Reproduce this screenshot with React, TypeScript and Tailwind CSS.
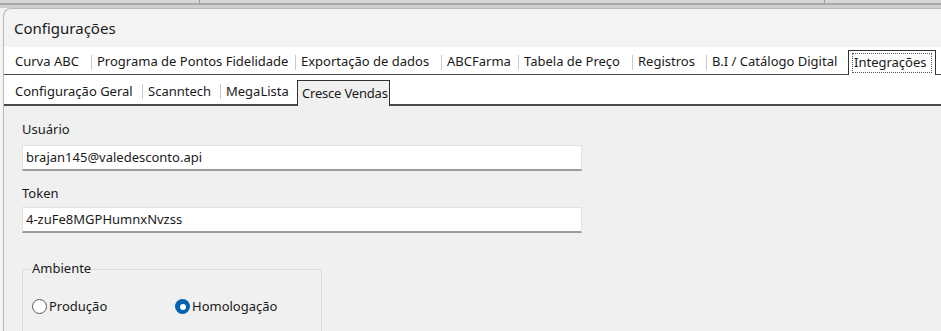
import React from "react";

const row1 = [
  { label: "Curva ABC", w: "w-[82px]", first: true },
  { label: "Programa de Pontos Fidelidade", w: "w-[204px]" },
  { label: "Exportação de dados", w: "w-[146px]" },
  { label: "ABCFarma", w: "w-[77px]" },
  { label: "Tabela de Preço", w: "w-[114px]" },
  { label: "Registros", w: "w-[74px]" },
  { label: "B.I / Catálogo Digital", w: "w-[140px]" },
];

const row2 = [
  { label: "Configuração Geral", w: "w-[133px]", first: true },
  { label: "Scanntech", w: "w-[78px]" },
  { label: "MegaLista", w: "w-[75px]" },
];

function Tab({ label, w, first }: { label: string; w: string; first?: boolean }) {
  return (
    <div className={`${w} h-full flex items-center`}>
      {!first && <div className="w-px h-[15px] bg-[#c9c9c9] shrink-0" />}
      <span className={`${first ? "pl-[6px]" : "pl-[5px]"} whitespace-nowrap text-[#1a1a1a]`}>{label}</span>
    </div>
  );
}

function Radio({ checked, label }: { checked?: boolean; label: string }) {
  return (
    <div className="flex items-center gap-[2px]">
      {checked ? (
        <div className="w-[15px] h-[15px] rounded-full bg-[#0063b1] flex items-center justify-center">
          <div className="w-[6px] h-[6px] rounded-full bg-white" />
        </div>
      ) : (
        <div className="w-[15px] h-[15px] rounded-full border border-[#5a5a5a] bg-white" />
      )}
      <span className="text-[#1a1a1a]">{label}</span>
    </div>
  );
}

export default function App() {
  return (
    <div className="w-[941px] h-[331px] overflow-hidden bg-[#f4f4f4] flex flex-col font-['Noto_Sans',sans-serif] text-[13px]">
      {/* strip from window behind */}
      <div className="h-[8px] flex flex-col shrink-0">
        <div className="h-[3px] bg-[#d6d6d6] flex">
          <div className="w-[200px] border-r border-[#9a9a9a]" />
          <div className="w-[625px] border-r border-[#9a9a9a]" />
        </div>
        <div className="h-[2px] bg-[#a9a9a9]" />
        <div className="h-[3px] bg-[#cfcfcf]" />
      </div>

      <div className="flex-1 ml-[3px] border-l border-t border-[#b9b9b9] rounded-tl-[8px] bg-[#f3f3f4] flex flex-col overflow-hidden">
        {/* title */}
        <div className="h-[38px] shrink-0 flex items-center pl-[10px] text-[15px] text-[#1a1a1a]">Configurações</div>

        {/* row 1 tabs */}
        <div className="h-[28px] shrink-0 bg-white flex items-end border-b border-[#4a4a4a] pl-[5px]">
          <div className="flex h-[24px]">
            {row1.map((t) => (
              <Tab key={t.label} {...t} />
            ))}
          </div>
          <div className="ml-[2px] w-[88px] h-[25px] -mb-px bg-white border border-b-0 border-[#333] px-[3px] pt-[2px]">
            <div className="h-[20px] border border-dotted border-[#555] flex items-center pl-[1px] whitespace-nowrap text-[#1a1a1a]">Integrações</div>
          </div>
        </div>

        {/* row 2 tabs */}
        <div className="h-[31px] shrink-0 bg-white flex items-end border-b-2 border-[#4a4a4a] pl-[5px]">
          <div className="flex h-[25px]">
            {row2.map((t) => (
              <Tab key={t.label} {...t} />
            ))}
          </div>
          <div className="ml-[2px] w-[93px] h-[26px] -mb-[2px] bg-[#f0f0f0] border border-b-0 border-[#333] flex items-center pl-[4px] whitespace-nowrap tracking-[-0.2px] text-[#1a1a1a]">
            Cresce Vendas
          </div>
        </div>

        {/* content */}
        <div className="flex-1 bg-[#f0f0f0] pl-[18px] pt-[14px] text-[#1a1a1a]">
          <div className="h-[20px] flex items-center">Usuário</div>
          <div className="mt-[5px] w-[560px] h-[26px] bg-white border border-[#e2e2e2] border-b-2 border-b-[#9c9c9c] flex items-center pl-[3px]">
            brajan145@valedesconto.api
          </div>
          <div className="mt-[13px] h-[20px] flex items-center">Token</div>
          <div className="mt-[3px] w-[560px] h-[26px] bg-white border border-[#e2e2e2] border-b-2 border-b-[#9c9c9c] flex items-center pl-[3px]">
            4-zuFe8MGPHumnxNvzss
          </div>

          <div className="mt-[36px] w-[300px] h-[80px] border border-[#dcdcdc] rounded-[3px] relative">
            <span className="absolute -top-[11px] left-[8px] bg-[#f0f0f0] px-px">Ambiente</span>
            <div className="flex pt-[27px] pl-[9px]">
              <div className="w-[143px]">
                <Radio label="Produção" />
              </div>
              <Radio checked label="Homologação" />
            </div>
          </div>
        </div>
      </div>
    </div>
  );
}
